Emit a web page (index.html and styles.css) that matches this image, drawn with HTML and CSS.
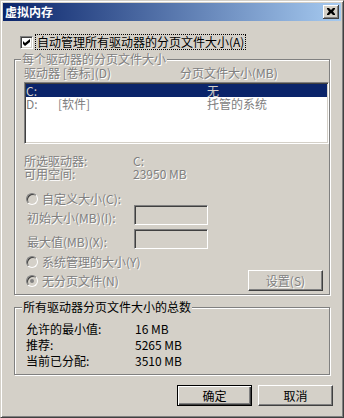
FILE: index.html
```html
<!DOCTYPE html>
<html lang="zh-CN">
<head>
  <meta charset="UTF-8">
  <meta name="viewport" content="width=device-width, initial-scale=1.0">
  <title>虚拟内存</title>
  <link rel="stylesheet" href="styles.css">
</head>
<body>
  <div class="window">
    <div class="titlebar">
      <span class="title">虚拟内存</span>
      <button type="button" class="close-button">
        <svg width="8" height="7" viewBox="0 0 8 7">
          <path d="M0 0h2l2 2l2-2h2v1l-2 2.5l2 2.5v1h-2l-2-2l-2 2h-2v-1l2-2.5l-2-2.5z" fill="#000"/>
        </svg>
      </button>
    </div>

    <div class="dialog">
      <label class="auto-row">
        <span class="checkbox">
          <svg width="7" height="7" viewBox="0 0 7 7">
            <path d="M0 2l2 2l5-4v3l-5 4l-2-2z" fill="#000"/>
          </svg>
        </span>
        <span class="focus-label">自动管理所有驱动器的分页文件大小(A)</span>
      </label>

      <fieldset class="group drives-group">
        <legend class="disabled">每个驱动器的分页文件大小</legend>
        <div class="list-header disabled">
          <span>驱动器 [卷标](D)</span>
          <span>分页文件大小(MB)</span>
        </div>
        <div class="listbox">
          <div class="list-row selected"><span>C:</span><span></span><span>无</span></div>
          <div class="list-row disabled"><span>D:</span><span>[软件]</span><span>托管的系统</span></div>
        </div>

        <div class="drive-info disabled">
          <span>所选驱动器:</span><span>C:</span>
          <span>可用空间:</span><span>23950 MB</span>
        </div>

        <div class="radio-row custom-row disabled"><span class="radio"></span>自定义大小(C):</div>
        <div class="field-row disabled">
          <span class="field-label">初始大小(MB)(I):</span>
          <span class="textbox"></span>
        </div>
        <div class="field-row second disabled">
          <span class="field-label">最大值(MB)(X):</span>
          <span class="textbox"></span>
        </div>
        <div class="radio-row system-row disabled"><span class="radio"></span>系统管理的大小(Y)</div>
        <div class="last-row">
          <div class="radio-row disabled"><span class="radio checked"></span>无分页文件(N)</div>
          <button type="button" class="button set-button disabled">设置(S)</button>
        </div>
      </fieldset>

      <fieldset class="group totals-group">
        <legend>所有驱动器分页文件大小的总数</legend>
        <div class="totals">
          <span>允许的最小值:</span><span>16 MB</span>
          <span>推荐:</span><span>5265 MB</span>
          <span>当前已分配:</span><span>3510 MB</span>
        </div>
      </fieldset>

      <div class="dialog-buttons">
        <button type="button" class="button default">确定</button>
        <button type="button" class="button">取消</button>
      </div>
    </div>
  </div>
</body>
</html>
```

FILE: styles.css
```css
* {
  box-sizing: border-box;
}

body {
  margin: 0;
  font-family: "Noto Sans CJK SC", "Liberation Sans", sans-serif;
  font-size: 12px;
  line-height: 14px;
  color: #000;
  background-color: #d4d0c8;
}

.window {
  width: 344px;
  height: 418px;
  padding: 2px;
  background-color: #d4d0c8;
  border: 1px solid;
  border-color: #d4d0c8 #404040 #404040 #d4d0c8;
  box-shadow: inset 1px 1px #fff, inset -1px -1px #808080;
}

.titlebar {
  display: flex;
  align-items: center;
  justify-content: space-between;
  height: 18px;
  padding: 0 2px;
  background: linear-gradient(to right, #0a246a, #a6caf0);
}

.title {
  color: #fff;
  font-weight: bold;
}

.close-button {
  display: flex;
  align-items: center;
  justify-content: center;
  width: 16px;
  height: 14px;
  padding: 0 1px 1px 0;
  border: none;
  background-color: #d4d0c8;
  box-shadow: inset -1px -1px #404040, inset 1px 1px #fff, inset -2px -2px #808080;
}

.dialog {
  padding-top: 13px;
}

.disabled {
  color: #808080;
  text-shadow: 1px 1px 0 #fff;
}

/* checkbox row */
.auto-row {
  display: flex;
  align-items: center;
  gap: 2px;
  height: 16px;
  margin-left: 17px;
}

.checkbox {
  display: flex;
  align-items: center;
  justify-content: center;
  width: 13px;
  height: 13px;
  background-color: #fff;
  border: 1px solid;
  border-color: #808080 #fff #fff #808080;
  box-shadow: inset 1px 1px #404040, inset -1px -1px #d4d0c8;
}

.focus-label {
  padding: 0 1px;
  border: 1px dotted #000;
}

/* group boxes */
.group {
  min-width: 0;
  margin: 2px 11px 0;
  padding: 0 0 3px 9px;
  border: 1px solid #808080;
  box-shadow: 1px 1px #fff, inset 1px 1px #fff;
}

.group legend {
  margin-left: -3px;
  padding: 0 1px;
  line-height: 14px;
  background-color: #d4d0c8;
}

.list-header {
  display: grid;
  grid-template-columns: 156px auto;
}

.listbox {
  height: 62px;
  margin-top: 2px;
  padding: 1px;
  background-color: #fff;
  border: 1px solid;
  border-color: #808080 #fff #fff #808080;
  box-shadow: inset 1px 1px #404040, inset -1px -1px #d4d0c8;
}

.list-row {
  display: grid;
  grid-template-columns: 32px 149px auto;
  height: 13px;
  line-height: 13px;
}

.list-row.selected {
  background-color: #0a246a;
  color: #d4d0c8;
}

.drive-info {
  display: grid;
  grid-template-columns: 109px auto;
  margin-top: 10px;
  line-height: 13px;
}

.radio-row {
  display: flex;
  align-items: center;
  gap: 4px;
  height: 12px;
  padding-left: 2px;
}

.custom-row {
  margin-top: 13px;
}

.system-row {
  margin-top: 7px;
}

.radio {
  display: flex;
  align-items: center;
  justify-content: center;
  flex: none;
  width: 12px;
  height: 12px;
  border-radius: 50%;
  background-color: #d4d0c8;
  border: 1px solid;
  border-color: #808080 #fff #fff #808080;
  box-shadow: inset 1px 1px #404040, inset -1px -1px #d4d0c8;
}

.radio.checked::after {
  content: "";
  width: 4px;
  height: 4px;
  border-radius: 50%;
  background-color: #808080;
}

.field-row {
  display: flex;
  height: 20px;
  padding-left: 3px;
}

.field-row.second {
  margin-top: 4px;
}

.field-label {
  width: 107px;
  margin-top: 6px;
}

.textbox {
  width: 74px;
  height: 20px;
  background-color: #d4d0c8;
  border: 1px solid;
  border-color: #808080 #fff #fff #808080;
  box-shadow: inset 1px 1px #404040, inset -1px -1px #d4d0c8;
}

.last-row {
  display: flex;
  align-items: center;
  justify-content: space-between;
  height: 21px;
  margin-top: 2px;
}

.set-button {
  margin-right: 6px;
}

.totals-group {
  margin-top: 5px;
  padding: 7px 0 5px 11px;
}

.totals-group legend {
  margin-left: -4px;
}

.totals {
  display: grid;
  grid-template-columns: 109px auto;
  grid-auto-rows: 16px;
  line-height: 16px;
}

/* buttons */
.button {
  width: 75px;
  height: 21px;
  padding: 0;
  font: inherit;
  color: #000;
  background-color: #d4d0c8;
  border: 1px solid;
  border-color: #fff #404040 #404040 #fff;
  box-shadow: inset -1px -1px #808080;
}

.button.disabled {
  color: #808080;
}

.button.default {
  border-color: #000;
  box-shadow: inset 1px 1px #fff, inset -1px -1px #404040, inset -2px -2px #808080;
}

.dialog-buttons {
  display: flex;
  justify-content: flex-end;
  gap: 6px;
  margin-top: 10px;
  padding-right: 8px;
}
```
